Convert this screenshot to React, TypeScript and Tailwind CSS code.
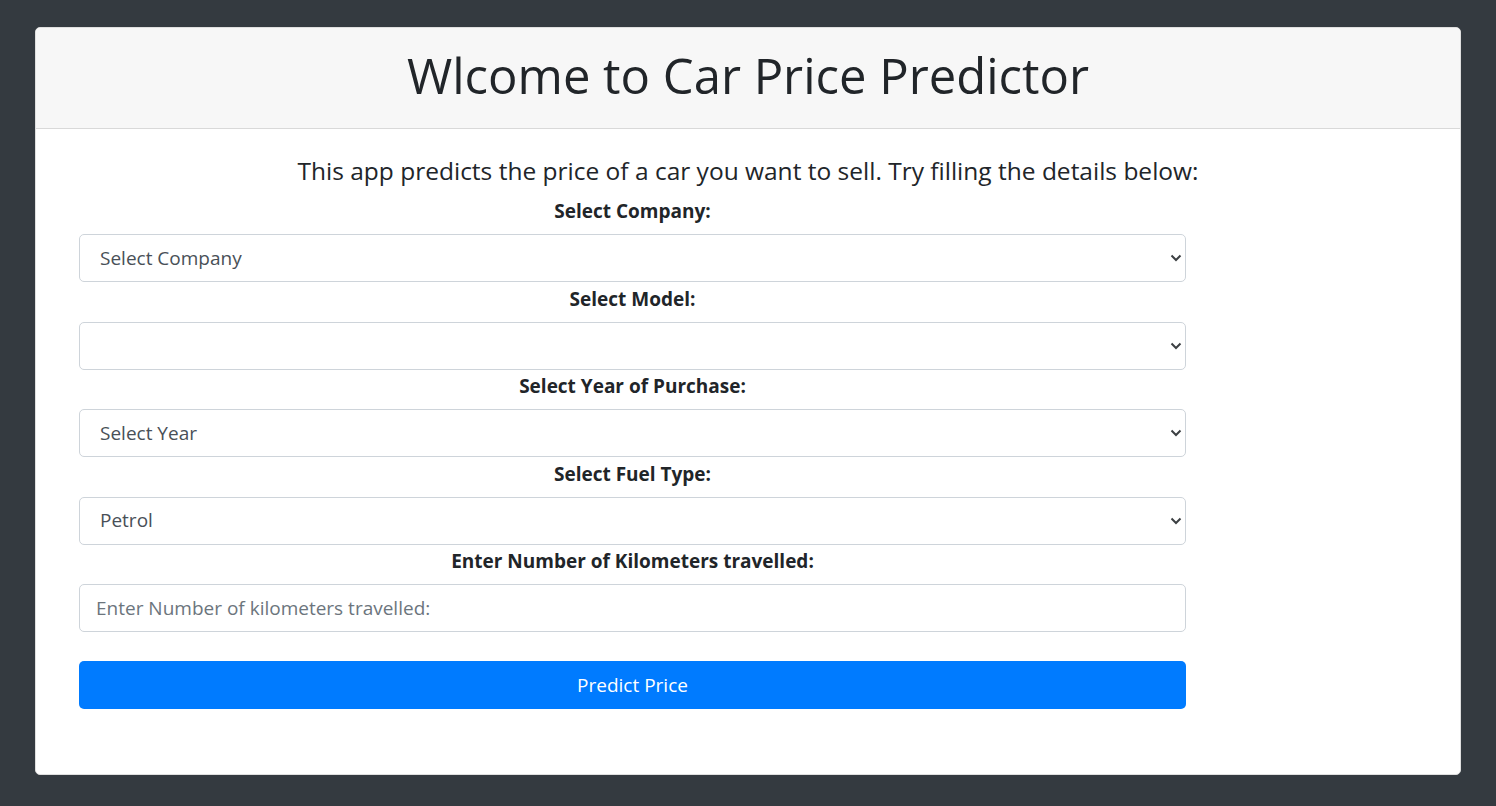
import React from "react";

const font = { fontFamily: '"Open Sans", "Noto Sans", sans-serif' };

function Chevron() {
  return (
    <svg
      className="pointer-events-none absolute right-[4px] top-1/2 -translate-y-1/2"
      width="12"
      height="8"
      viewBox="0 0 12 8"
    >
      <path d="M1.5 1.5 6 6l4.5-4.5" fill="none" stroke="#3c4043" strokeWidth="2" />
    </svg>
  );
}

function Field({
  label,
  first,
  children,
}: {
  label: string;
  first?: boolean;
  children: React.ReactNode;
}) {
  return (
    <div className="flex flex-col">
      <div
        className={`${first ? "" : "mt-[4.5px]"} mb-[11px] h-[24px] text-center text-[19px] font-bold leading-[24px] text-[#212529]`}
      >
        {label}
      </div>
      {children}
    </div>
  );
}

function Select({ value, options }: { value: string; options: string[] }) {
  return (
    <div className="relative h-[48px] w-full">
      <select
        defaultValue={value}
        className="h-[48px] w-full appearance-none rounded-[5px] border border-[#ced4da] bg-white pl-[20px] pr-[24px] text-[19px] text-[#495057] outline-none"
        style={font}
      >
        {options.map((o) => (
          <option key={o} value={o}>
            {o}
          </option>
        ))}
      </select>
      <Chevron />
    </div>
  );
}

export default function App() {
  return (
    <div className="min-h-[806px] w-full bg-[#343a40] pt-[27px]" style={font}>
      <div className="mx-[35px] flex h-[748px] flex-col overflow-hidden rounded-[5px] border border-[#dfdfdf] bg-white">
        <div className="flex h-[101px] items-center justify-center border-b border-[#d9d9d9] bg-[#f7f7f7]">
          <h1 className="pb-[6px] text-[49px] font-medium leading-[52px] text-[#212529]">
            Wlcome to Car Price Predictor
          </h1>
        </div>
        <div className="flex flex-col pt-[27px]">
          <h4 className="h-[29px] text-center text-[24.5px] font-medium leading-[29px] text-[#212529]">
            This app predicts the price of a car you want to sell. Try filling the details below:
          </h4>
          <form className="ml-[43px] mt-[14px] flex w-[1107px] flex-col" onSubmit={(e) => e.preventDefault()}>
            <Field label="Select Company:" first>
              <Select value="Select Company" options={["Select Company", "Maruti", "Hyundai", "Honda", "Toyota"]} />
            </Field>
            <Field label="Select Model:">
              <Select value="" options={[""]} />
            </Field>
            <Field label="Select Year of Purchase:">
              <Select value="Select Year" options={["Select Year", "2019", "2018", "2017"]} />
            </Field>
            <Field label="Select Fuel Type:">
              <Select value="Petrol" options={["Petrol", "Diesel", "LPG"]} />
            </Field>
            <Field label="Enter Number of Kilometers travelled:">
              <input
                type="text"
                placeholder="Enter Number of kilometers travelled:"
                className="h-[48px] w-full rounded-[5px] border border-[#ced4da] bg-white px-[16px] text-[19px] text-[#495057] outline-none placeholder:text-[#6c757d]"
                style={font}
              />
            </Field>
            <button
              type="submit"
              className="mt-[29px] h-[48px] w-full rounded-[5px] bg-[#007bff] text-[19px] text-white"
              style={font}
            >
              Predict Price
            </button>
          </form>
        </div>
      </div>
    </div>
  );
}
